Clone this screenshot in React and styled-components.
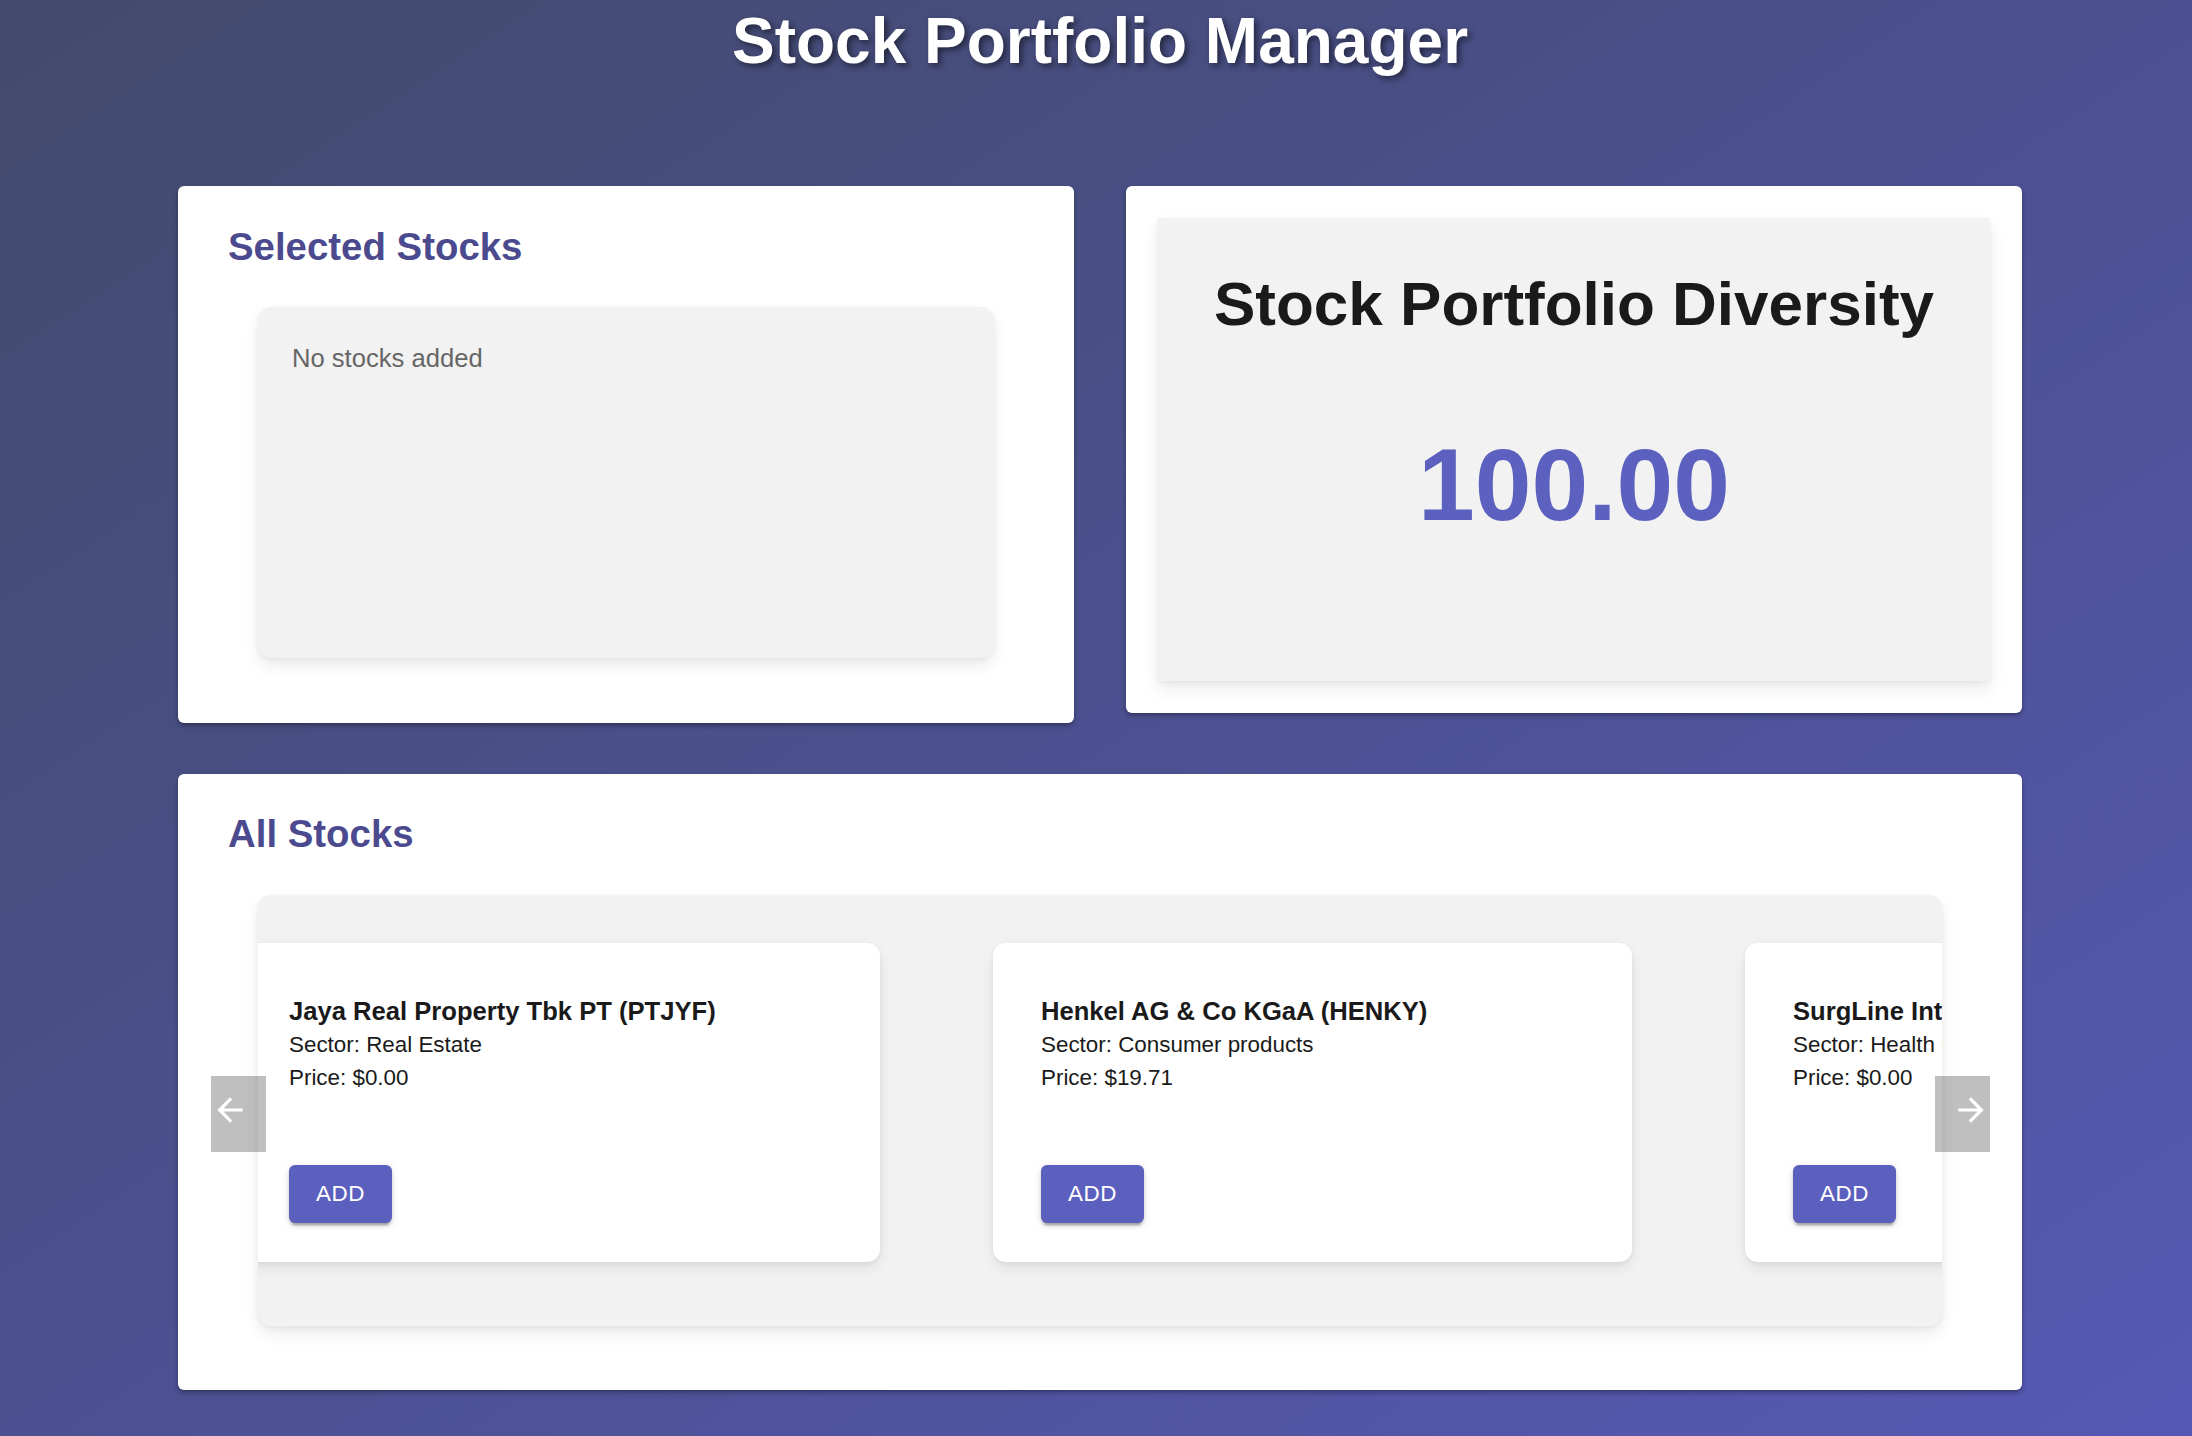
import React from "react";
import styled, { createGlobalStyle } from "styled-components";

const stocks = [
  { symbol: "PTJYF", name: "Jaya Real Property Tbk PT", sector: "Real Estate", price: 0 },
  { symbol: "HENKY", name: "Henkel AG & Co KGaA", sector: "Consumer products", price: 19.71 },
  { symbol: "SGLN", name: "SurgLine International Inc", sector: "Health Care", price: 0 },
];

const GlobalStyle = createGlobalStyle`
  * {
    box-sizing: border-box;
  }
  body {
    margin: 0;
    font-family: "Liberation Sans", Arial, sans-serif;
  }
`;

const ArrowBack = () => (
  <svg width="38" height="38" viewBox="0 0 24 24" fill="currentColor">
    <path d="M20 11H7.83l5.59-5.59L12 4l-8 8 8 8 1.41-1.41L7.83 13H20v-2z" />
  </svg>
);

const ArrowForward = () => (
  <svg width="38" height="38" viewBox="0 0 24 24" fill="currentColor">
    <path d="M12 4l-1.41 1.41L16.17 11H4v2h12.17l-5.58 5.59L12 20l8-8z" />
  </svg>
);

const StockCard = ({ name, symbol, sector, price }) => {
  return (
    <Card>
      <CardTitle>
        {name} ({symbol})
      </CardTitle>
      <CardLine>Sector: {sector}</CardLine>
      <CardLine>Price: ${price.toFixed(2)}</CardLine>
      <AddButton>Add</AddButton>
    </Card>
  );
};

const App = () => {
  const diversity = 100;

  return (
    <Page>
      <GlobalStyle />
      <Title>Stock Portfolio Manager</Title>

      <TopRow>
        <Panel $pad="42px 51px 65px 50px">
          <Heading>Selected Stocks</Heading>
          <SelectedBox>
            <EmptyText>No stocks added</EmptyText>
          </SelectedBox>
        </Panel>

        <Panel $pad="32px">
          <DiversityBox>
            <DiversityTitle>Stock Portfolio Diversity</DiversityTitle>
            <DiversityValue>{diversity.toFixed(2)}</DiversityValue>
          </DiversityBox>
        </Panel>
      </TopRow>

      <Panel $pad="41px 51px 64px 50px" $top="51px">
        <Heading>All Stocks</Heading>
        <Carousel>
          <Viewport>
            <Track>
              {stocks.map((s) => (
                <StockCard key={s.symbol} {...s} />
              ))}
            </Track>
          </Viewport>
          <NavButton $side="left" aria-label="previous">
            <ArrowBack />
          </NavButton>
          <NavButton $side="right" aria-label="next">
            <ArrowForward />
          </NavButton>
        </Carousel>
      </Panel>
    </Page>
  );
};

const Page = styled.div`
  min-height: 100vh;
  padding: 4px 170px 45px 178px;
  background: linear-gradient(to bottom right, #434a6b 0%, #4b5190 50%, #5659b4 100%);
`;

const Title = styled.h1`
  margin: 0 0 108px;
  text-align: center;
  font-size: 64px;
  line-height: 74px;
  font-weight: 700;
  color: #ffffff;
  text-shadow: 3px 3px 6px rgba(0, 0, 0, 0.5);
`;

const TopRow = styled.div`
  display: grid;
  grid-template-columns: 896px 896px;
  column-gap: 52px;
  align-items: start;
`;

const Panel = styled.section`
  background: #ffffff;
  border-radius: 6px;
  padding: ${(p) => p.$pad};
  margin-top: ${(p) => p.$top || "0"};
  box-shadow: 0 3px 5px rgba(0, 0, 0, 0.25), 0 1px 2px rgba(0, 0, 0, 0.15);
`;

const Heading = styled.h2`
  margin: 0 0 41px;
  font-size: 38.4px;
  line-height: 1;
  font-weight: 700;
  color: #4b4a8f;
`;

const GreyBox = styled.div`
  background: #f2f2f2;
  box-shadow: 0 8px 16px rgba(0, 0, 0, 0.08), 0 2px 5px rgba(0, 0, 0, 0.05);
`;

const SelectedBox = styled(GreyBox)`
  margin: 0 29px 0 30px;
  height: 351px;
  border-radius: 13px;
  padding: 39px 34px;
`;

const EmptyText = styled.p`
  margin: 0;
  font-size: 25.6px;
  line-height: 1;
  color: #666666;
`;

const DiversityBox = styled(GreyBox)`
  height: 463px;
  padding-top: 55px;
  display: flex;
  flex-direction: column;
  align-items: center;
`;

const DiversityTitle = styled.h3`
  margin: 0 0 99px;
  font-size: 62px;
  line-height: 1;
  font-weight: 700;
  color: #1a1a1a;
`;

const DiversityValue = styled.div`
  font-size: 102px;
  line-height: 1;
  font-weight: 700;
  color: #5c60bf;
`;

const Carousel = styled(GreyBox)`
  position: relative;
  margin: 0 29px 0 30px;
  height: 431px;
  border-radius: 13px;
`;

const Viewport = styled.div`
  height: 100%;
  overflow: hidden;
  border-radius: 13px;
  padding-top: 48px;
`;

const Track = styled.div`
  display: flex;
  gap: 113px;
  margin-left: -17px;
`;

const Card = styled.article`
  flex: 0 0 639px;
  height: 319px;
  background: #ffffff;
  border-radius: 13px;
  padding: 51px 48px 39px;
  display: flex;
  flex-direction: column;
  box-shadow: 0 6px 14px rgba(0, 0, 0, 0.08), 0 2px 4px rgba(0, 0, 0, 0.05);
`;

const CardTitle = styled.h4`
  margin: 0;
  font-size: 25.6px;
  line-height: 34px;
  font-weight: 700;
  color: #1a1a1a;
  white-space: nowrap;
`;

const CardLine = styled.p`
  margin: 0;
  font-size: 22.4px;
  line-height: 33px;
  color: #1a1a1a;
  white-space: nowrap;
`;

const AddButton = styled.button`
  margin-top: auto;
  align-self: flex-start;
  width: 103px;
  height: 58px;
  border: none;
  border-radius: 6px;
  background: #5b5fbe;
  color: #ffffff;
  font-family: inherit;
  font-size: 22.4px;
  letter-spacing: 0.6px;
  text-transform: uppercase;
  cursor: pointer;
  box-shadow: 0 5px 2px -3px rgba(0, 0, 0, 0.2), 0 3px 3px 0 rgba(0, 0, 0, 0.14),
    0 2px 8px 0 rgba(0, 0, 0, 0.12);
`;

const NavButton = styled.button`
  position: absolute;
  top: 181px;
  ${(p) => (p.$side === "left" ? "left: -47px;" : "right: -48px;")}
  width: 55px;
  height: 76px;
  padding: 0 0 7px;
  border: none;
  background: rgba(0, 0, 0, 0.25);
  color: #ffffff;
  display: flex;
  align-items: center;
  justify-content: ${(p) => (p.$side === "left" ? "flex-start" : "flex-end")};
  cursor: pointer;
`;

export default App;
